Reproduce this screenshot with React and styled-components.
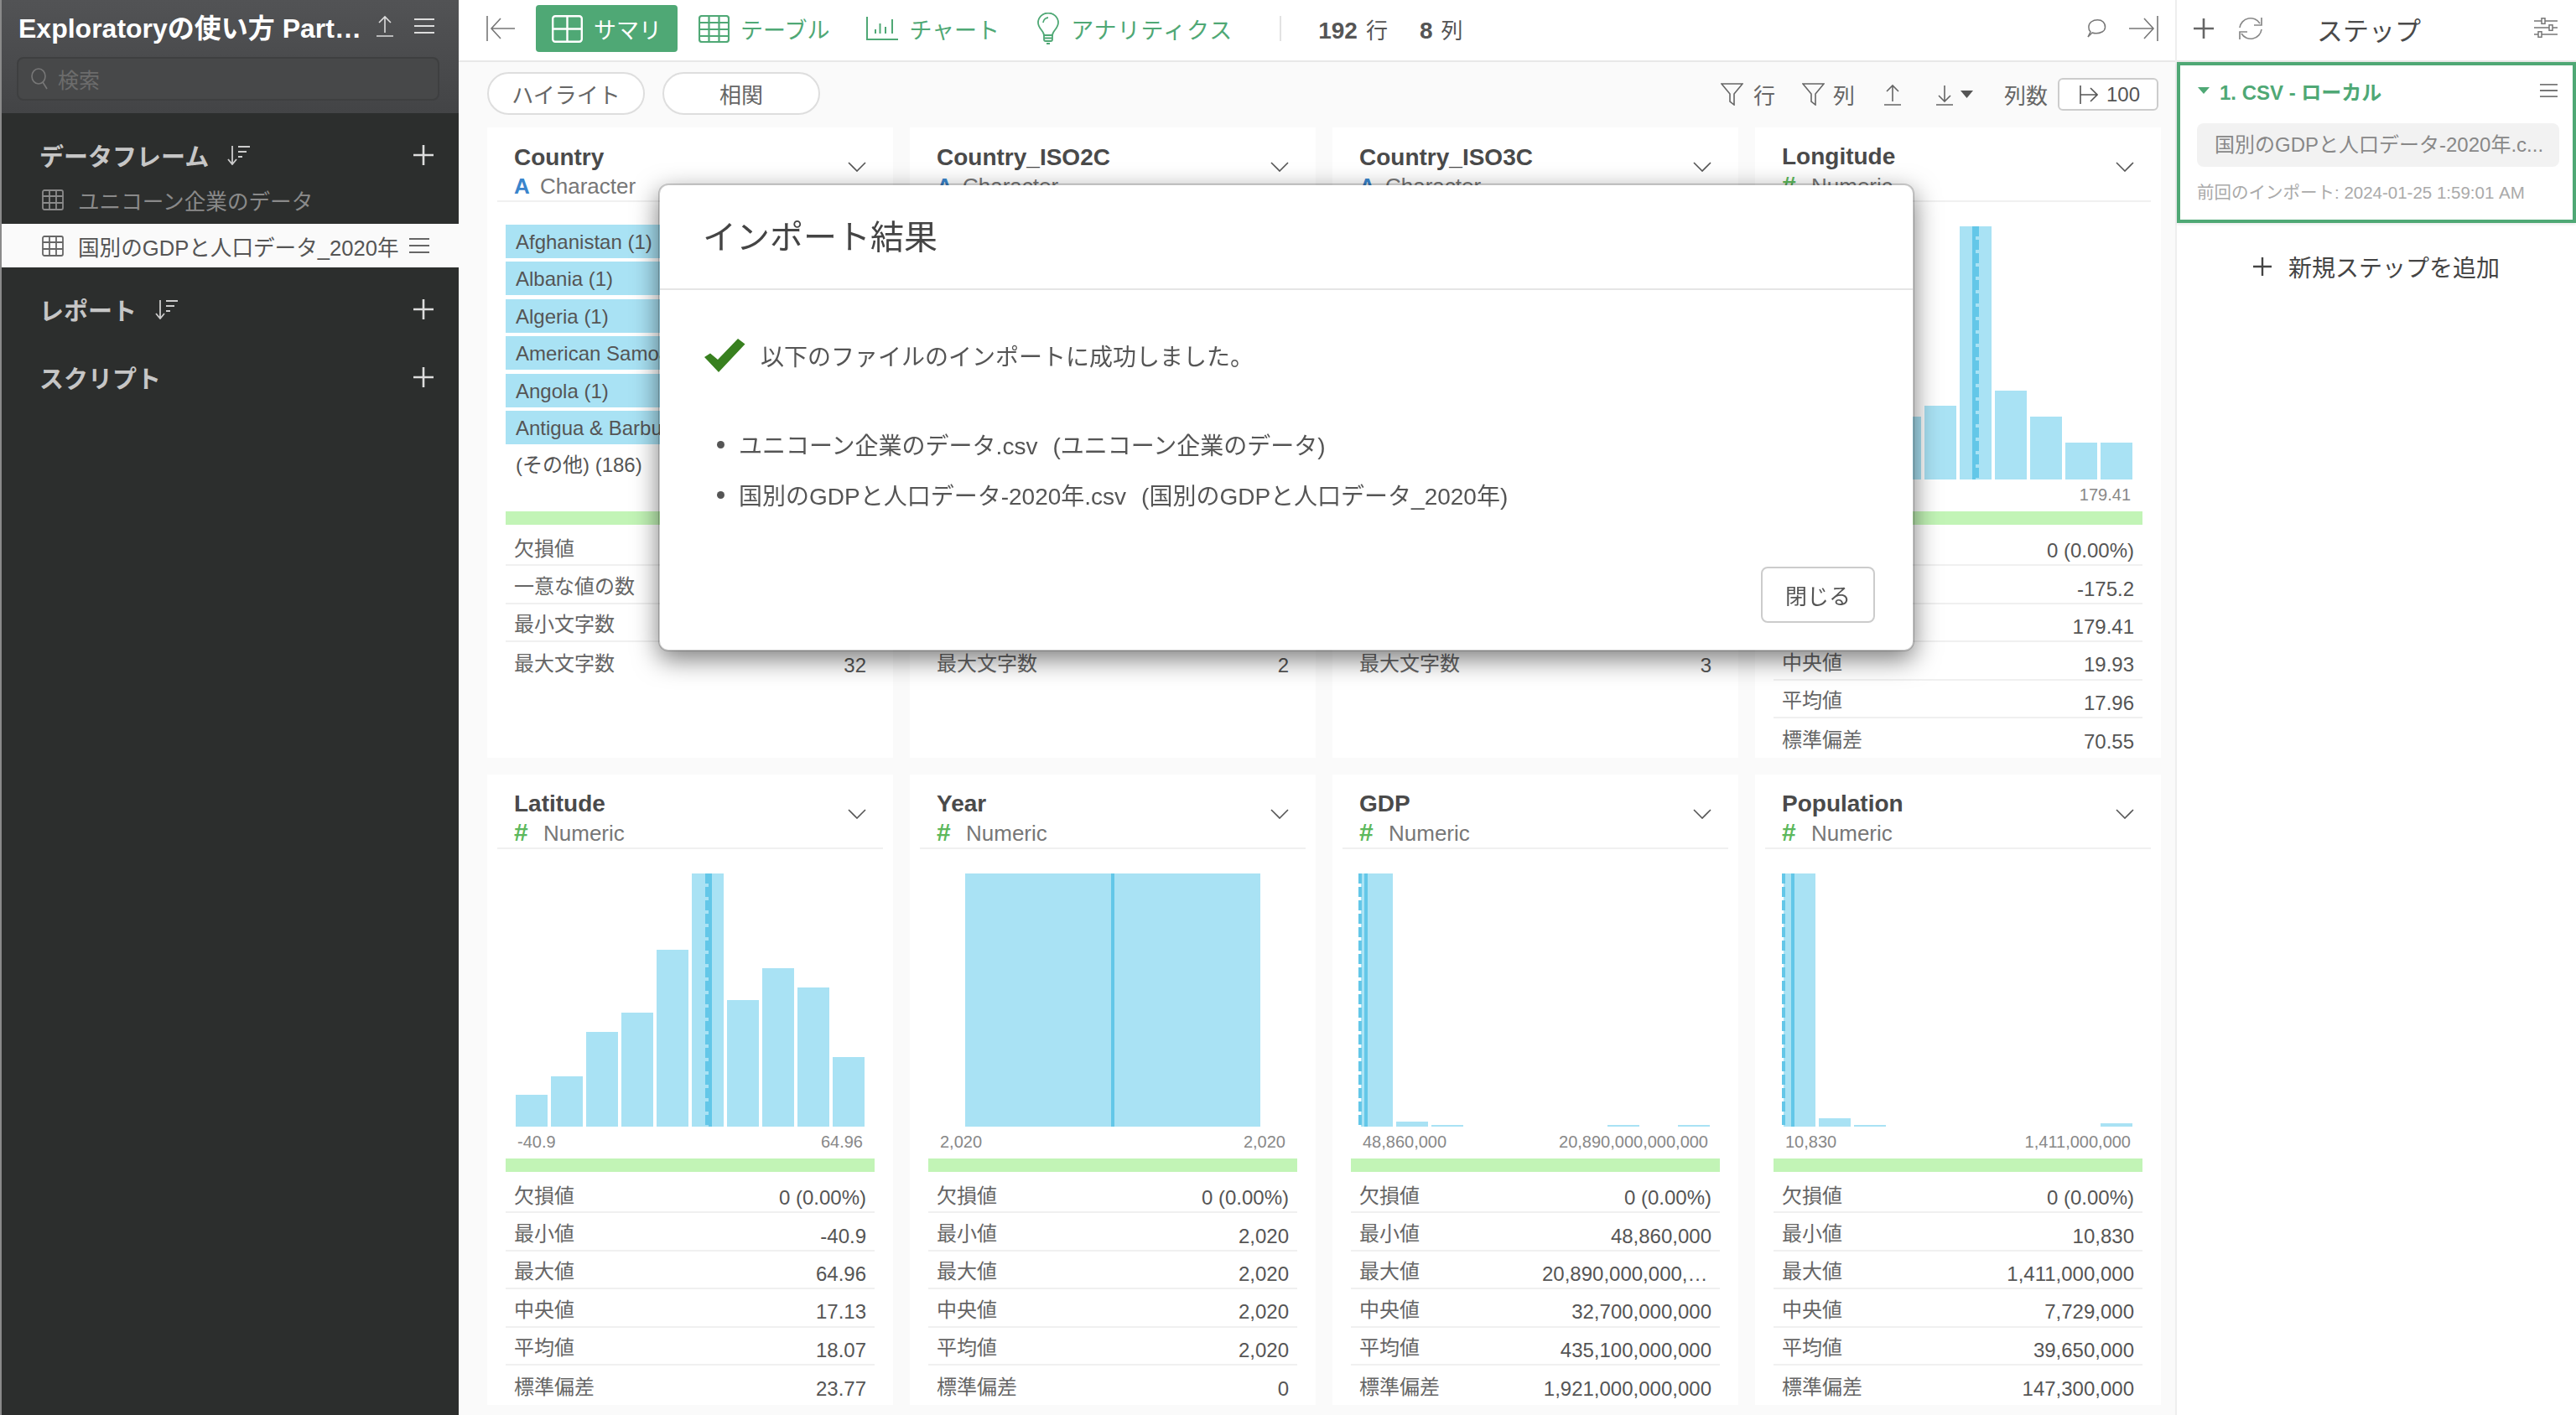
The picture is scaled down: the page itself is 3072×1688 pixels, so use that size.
import React from 'react'
import styled, { createGlobalStyle } from 'styled-components'

const FONT = `"Liberation Sans", "Noto Sans CJK JP", sans-serif`
const GREEN = '#4fa875'
const BAR = '#a9e2f4'
const MARK = '#63c7e8'

const Global = createGlobalStyle`
  html, body { margin: 0; padding: 0; background: #fafafa; }
  body { font-family: ${FONT}; color: #555; overflow: hidden; }
  * { box-sizing: border-box; }
`

const Page = styled.div`
  display: flex;
  width: 3072px;
  height: 1688px;
  overflow: hidden;
`

/* ---------- icons ---------- */

const Svg = styled.svg`
  display: block;
  flex: none;
  fill: none;
  stroke: ${p => p.$c || '#777'};
  stroke-width: ${p => p.$s || 1.6}px;
`

const Burger = ({ c, w = 24, h = 20 }) => (
  <Svg width={w} height={h} viewBox='0 0 24 20' preserveAspectRatio='none' $c={c} $s={2}>
    <path d='M0 2H24M0 10H24M0 18H24' />
  </Svg>
)
const Upload = ({ c }) => (
  <Svg width='22' height='26' viewBox='0 0 22 26' $c={c}>
    <path d='M11 21V2M4 9L11 2L18 9M1 25H21' />
  </Svg>
)
const Download = ({ c }) => (
  <Svg width='22' height='26' viewBox='0 0 22 26' $c={c}>
    <path d='M11 2V21M4 14L11 21L18 14M1 25H21' />
  </Svg>
)
const Plus = ({ c = '#ddd', size = 24, s = 2.6 }) => (
  <Svg width={size} height={size} viewBox='0 0 24 24' $c={c} $s={s}>
    <path d='M12 0V24M0 12H24' />
  </Svg>
)
const Sort = ({ c = '#ccc' }) => (
  <Svg width='28' height='24' viewBox='0 0 28 24' $c={c} $s={1.8}>
    <path d='M6 1V22M1 17L6 23L11 17M13 2H27M13 8H23M13 14H18' />
  </Svg>
)
const Grid = ({ c }) => (
  <Svg width='26' height='25' viewBox='0 0 26 25' $c={c} $s={1.8}>
    <rect x='1' y='1' width='24' height='23' rx='2' />
    <path d='M1 8H25M1 16H25M9 1V24M17 1V24' />
  </Svg>
)
const Search = () => (
  <Svg width='20' height='26' viewBox='0 0 20 26' $c='#777' $s={1.6}>
    <ellipse cx='9' cy='10' rx='8' ry='9' />
    <path d='M14 17L19 25' />
  </Svg>
)
const ArrowToLeft = () => (
  <Svg width='35' height='30' viewBox='0 0 35 30' $c='#777'>
    <path d='M1 0V30M34 15H7M17 3L6 15L17 27' />
  </Svg>
)
const ArrowToRight = () => (
  <Svg width='35' height='30' viewBox='0 0 35 30' $c='#777'>
    <path d='M0 15H28M18 3L29 15L18 27M34 0V30' />
  </Svg>
)
const Summary = () => (
  <Svg width='37' height='33' viewBox='0 0 37 33' $c='#fff' $s={2.4}>
    <rect x='1.2' y='1.2' width='34.6' height='30.6' rx='3' />
    <path d='M18.5 1V32M1 16.5H36' />
  </Svg>
)
const TableTab = () => (
  <Svg width='37' height='33' viewBox='0 0 37 33' $c={GREEN} $s={2.2}>
    <rect x='1' y='1' width='35' height='31' rx='3' />
    <path d='M1 9H36M1 17H36M1 25H36M12.5 1V32M24.5 1V32' />
  </Svg>
)
const ChartTab = () => (
  <Svg width='38' height='28' viewBox='0 0 38 28' $c={GREEN} $s={2}>
    <path d='M1 0V27H38' />
    <path d='M11 15V20M16.5 8V20M23 12V20M31 3V20' />
  </Svg>
)
const Bulb = () => (
  <Svg width='28' height='38' viewBox='-2 0 28 38' $c={GREEN} $s={1.8}>
    <path d='M8 27C8 22 1 19 1 12A12 11.5 0 0 1 25 12C25 19 18 22 18 27Z' transform='translate(-1 0)' />
    <path d='M7 27V32C7 33 8 34 9 34H15C16 34 17 33 17 32V27M7 30.5H17M10 37H14' />
    <path d='M6 12A6.5 6.5 0 0 1 12 6' />
  </Svg>
)
const Chat = () => (
  <Svg width='24' height='22' viewBox='0 0 24 22' $c='#777' $s={1.5}>
    <path d='M5 15C2 12 2 6 6 3C10 0 17 0 20 3C24 7 23 13 19 15C15 17 10 17 7 16L2 21L5 15Z' />
  </Svg>
)
const Funnel = () => (
  <Svg width='27' height='27' viewBox='0 0 27 27' $c='#666' $s={1.6}>
    <path d='M1 1H26L16 13V26L11 22V13Z' />
  </Svg>
)
const Caret = ({ c = '#555', w = 15, h = 9 }) => (
  <Svg width={w} height={h} viewBox='0 0 15 9' preserveAspectRatio='none' $c='none'>
    <polygon points='0,0 15,0 7.5,9' fill={c} />
  </Svg>
)
const ArrowFromBar = () => (
  <Svg width='22' height='24' viewBox='0 0 22 24' $c='#555'>
    <path d='M1 1V23M1 12H20M13 4L21 12L13 20' />
  </Svg>
)
const Refresh = () => (
  <Svg width='28' height='28' viewBox='0 0 28 28' $c='#888' $s={1.7}>
    <path d='M1 13A13 13 0 0 1 25 8M27 1V10H18' />
    <path d='M27 15A13 13 0 0 1 3 20M1 27V18H10' />
  </Svg>
)
const Sliders = () => (
  <Svg width='28' height='24' viewBox='0 0 28 24' $c='#777' $s={1.5}>
    <path d='M0 4H28M0 12H28M0 20H28' />
    <rect x='9' y='0.8' width='4' height='6.5' fill='#fff' />
    <rect x='18' y='8.8' width='4' height='6.5' fill='#fff' />
    <rect x='5' y='16.8' width='4' height='6.5' fill='#fff' />
  </Svg>
)
const Chevron = () => (
  <Svg width='22' height='12' viewBox='0 0 22 12' $c='#555' $s={1.6}>
    <path d='M1 1L11 11L21 1' />
  </Svg>
)
const Check = () => (
  <Svg width='49' height='40' viewBox='0 0 49 40' $c='none'>
    <polygon points='0,22 7,17.6 16,25 40,0 48.5,6.6 17,40' fill='#38801f' />
  </Svg>
)

/* ---------- left sidebar ---------- */

const Sidebar = styled.aside`
  flex: none;
  width: 547px;
  background: #2c2e2d;
  border-left: 2px solid #8a8a8a;
`

const ProjectHead = styled.div`
  height: 135px;
  padding: 13px 29px 0 20px;
  background: linear-gradient(#525355, #434446);
`

const ProjectRow = styled.div`
  display: flex;
  align-items: center;
  height: 36px;
`

const ProjectName = styled.div`
  flex: 1;
  font-size: 32px;
  font-weight: 700;
  color: #fff;
  white-space: nowrap;
`

const ProjectTools = styled.div`
  display: flex;
  align-items: center;
  gap: 24px;
`

const SearchBox = styled.div`
  display: flex;
  align-items: center;
  gap: 12px;
  width: 504px;
  height: 52px;
  margin: 19px 0 0 -2px;
  padding-left: 15px;
  background: #474849;
  border: 2px solid #3e3f40;
  border-radius: 8px;
  font-size: 25px;
  color: #6c6c6c;
`

const SideBody = styled.div`
  padding-top: 24px;
`

const SideHeading = styled.div`
  display: flex;
  align-items: center;
  gap: 22px;
  height: 52px;
  margin-top: ${p => p.$top || 0}px;
  padding: 0 30px 0 45px;
  font-size: 29px;
  font-weight: 700;
  color: #c6c6c6;
`

const HeadingPlus = styled.span`
  margin-left: auto;
`

const SideItem = styled.div`
  display: flex;
  align-items: center;
  height: 52px;
  padding: 0 35px ${p => (p.$active ? 0 : 3)}px 48px;
  font-size: 25.6px;
  white-space: nowrap;
  color: ${p => (p.$active ? '#555' : '#8a8a8a')};
  background: ${p => (p.$active ? '#fafafa' : 'transparent')};
  margin-top: ${p => (p.$active ? 1 : 3)}px;

  > svg:first-child {
    margin-right: 17px;
  }
`

const ItemBurger = styled.span`
  margin-left: auto;
`

/* ---------- main column ---------- */

const Main = styled.main`
  flex: none;
  width: 2047px;
  display: flex;
  flex-direction: column;
`

const Toolbar = styled.div`
  display: flex;
  align-items: center;
  flex: none;
  height: 74px;
  padding: 0 20px 4px 33px;
  background: #fff;
  border-bottom: 2px solid #e8e8e8;
`

const Tabs = styled.div`
  display: flex;
  align-items: center;
  gap: 6px;
  margin-left: 24px;
`

const Tab = styled.div`
  display: flex;
  align-items: center;
  gap: 13px;
  height: 56px;
  padding: 0 19px;
  font-size: 27px;
  letter-spacing: ${p => (p.$wide ? 1 : 0)}px;
  border-radius: 4px;
  white-space: nowrap;
  color: ${p => (p.$active ? '#fff' : GREEN)};
  background: ${p => (p.$active ? GREEN : 'transparent')};
`

const Divider = styled.div`
  width: 2px;
  height: 30px;
  margin: 0 44px 0 37px;
  background: #e2e2e2;
`

const Count = styled.div`
  margin-right: 38px;
  font-size: 26px;
  color: #555;
  white-space: nowrap;

  b {
    font-size: 28px;
    margin-right: 10px;
  }
`

const RightTools = styled.div`
  display: flex;
  align-items: center;
  gap: 27px;
  margin-left: auto;
`

const FilterBar = styled.div`
  display: flex;
  align-items: flex-start;
  flex: none;
  height: 78px;
  padding: 12px 20px 0 34px;
`

const Pill = styled.div`
  display: flex;
  align-items: center;
  justify-content: center;
  width: 188px;
  height: 51px;
  margin-right: 21px;
  background: #fff;
  border: 2px solid #dedede;
  border-radius: 26px;
  font-size: 26px;
  color: #666;
`

const FilterTools = styled.div`
  display: flex;
  align-items: center;
  height: 39px;
  margin: 7px 0 0 auto;
  font-size: 26px;
  color: #666;
`

const FilterItem = styled.div`
  display: flex;
  align-items: center;
  gap: ${p => p.$gap || 12}px;
  margin-left: ${p => p.$left || 0}px;
`

const LimitBox = styled.div`
  display: flex;
  align-items: center;
  gap: 10px;
  width: 120px;
  height: 39px;
  margin-left: 12px;
  padding-left: 24px;
  background: #fff;
  border: 2px solid #ccc;
  border-radius: 6px;
  font-size: 24px;
  color: #555;
`

const CardGrid = styled.div`
  display: grid;
  grid-template-columns: repeat(4, 484px);
  grid-auto-rows: 752px;
  gap: 20px;
  padding-left: 34px;
`

const CardBox = styled.section`
  background: #fff;
`

const CardHead = styled.header`
  display: flex;
  justify-content: space-between;
  align-items: center;
  height: 89px;
  margin: 0 12px;
  padding: 18px 20px 0;
  border-bottom: 2px solid #f0f0f0;
`

const CardTitle = styled.div`
  font-size: 28px;
  line-height: 34px;
  font-weight: 700;
  color: #4a4a4a;
  white-space: nowrap;
`

const CardType = styled.div`
  display: flex;
  align-items: baseline;
  font-size: 26px;
  line-height: 34px;
  color: #777;
`

const TypeMark = styled.span`
  width: ${p => (p.$text ? 31 : 35)}px;
  font-size: ${p => (p.$text ? 26 : 30)}px;
  font-weight: 700;
  color: ${p => (p.$text ? '#3a85cc' : '#5cb85c')};
`

const ChevronWrap = styled.span`
  margin-top: -12px;
`

const CardBody = styled.div`
  height: 369px;
  padding-top: 29px;
`

const Bars = styled.div`
  position: relative;
  display: flex;
  align-items: flex-end;
  gap: 4px;
  height: 302px;
  margin: 0 34px;
`

const Bar = styled.div`
  flex: none;
  width: 38px;
  height: ${p => p.$h}%;
  background: ${BAR};
`

const WideBar = styled.div`
  width: 352px;
  height: 100%;
  margin-left: 32px;
  background: ${BAR};
`

const SolidMark = styled.div`
  position: absolute;
  top: 0;
  bottom: 0;
  left: ${p => p.$x}px;
  width: 4px;
  background: ${MARK};
`

const DashedMark = styled.div`
  position: absolute;
  top: 0;
  bottom: 0;
  left: ${p => p.$x}px;
  width: 4px;
  background: repeating-linear-gradient(${MARK} 0 12px, transparent 12px 16px);
`

const AxisLabels = styled.div`
  display: flex;
  justify-content: space-between;
  margin: 0 36px 0 36px;
  font-size: 20px;
  line-height: 36px;
  color: #888;
`

const CategoryList = styled.div`
  display: flex;
  flex-direction: column;
  gap: 4.4px;
  margin: -2px 22px 0;
`

const Category = styled.div`
  height: 40px;
  padding-left: 12px;
  font-size: 24px;
  line-height: 42px;
  color: #555;
  white-space: nowrap;
  background: ${p => (p.$plain ? 'transparent' : BAR)};
`

const FillBar = styled.div`
  height: 16px;
  margin: 0 22px;
  background: #c2f4b6;
`

const StatList = styled.div`
  margin: 4px 22px 0;
`

const StatRow = styled.div`
  display: flex;
  align-items: center;
  justify-content: space-between;
  height: 45.4px;
  padding: 1px 10px 0;
  border-bottom: 2px solid #f0f0f0;
  font-size: 24px;
  color: #666;

  &:last-child {
    border-bottom: none;
  }
`

const StatValue = styled.span`
  max-width: 202px;
  padding-top: 10px;
  overflow: hidden;
  text-overflow: ellipsis;
  white-space: nowrap;
  color: #555;
`

const StatLabel = styled.span`
  flex: none;
  white-space: nowrap;
`

/* ---------- right panel ---------- */

const StepPanel = styled.aside`
  flex: none;
  width: 478px;
  background: #fff;
  border-left: 2px solid #eee;
`

const StepHead = styled.div`
  display: flex;
  align-items: center;
  height: 74px;
  padding: 0 22px 4px 20px;
  border-bottom: 2px solid #e8e8e8;
`

const StepRefresh = styled.span`
  margin-left: 30px;
`

const StepTitle = styled.div`
  margin-left: 65px;
  font-size: 31px;
  color: #4a4a4a;
`

const StepTune = styled.span`
  margin: -3px 0 0 auto;
`

const StepCard = styled.div`
  height: 192px;
  padding: 0 18px 0 20px;
  border: 4px solid ${GREEN};
  box-shadow: 0 2px 3px rgba(0, 0, 0, 0.08);
`

const StepTop = styled.div`
  display: flex;
  align-items: center;
  gap: 12px;
  height: 60px;
  margin-left: 1px;
  font-size: 24px;
  font-weight: 700;
  color: ${GREEN};
`

const StepBurger = styled.span`
  margin-left: auto;
`

const FileChip = styled.div`
  width: 432px;
  height: 52px;
  margin-top: 9px;
  padding-left: 21px;
  border-radius: 8px;
  background: #f2f2f2;
  font-size: 24px;
  line-height: 52px;
  color: #888;
  white-space: nowrap;
`

const LastImport = styled.div`
  margin-top: 15px;
  font-size: 20.5px;
  line-height: 32px;
  color: #aaa;
  white-space: nowrap;
`

const AddStep = styled.div`
  display: flex;
  align-items: center;
  justify-content: center;
  gap: 20px;
  height: 104px;
  font-size: 28px;
  color: #444;
`

/* ---------- modal ---------- */

const Modal = styled.div`
  position: fixed;
  left: 785px;
  top: 219px;
  width: 1498px;
  height: 558px;
  display: flex;
  flex-direction: column;
  background: #fff;
  border: 2px solid rgba(0, 0, 0, 0.2);
  background-clip: padding-box;
  border-radius: 12px;
  box-shadow: 0 10px 30px rgba(0, 0, 0, 0.5);
`

const ModalHead = styled.div`
  flex: none;
  height: 125px;
  padding: 0 51px;
  border-bottom: 2px solid #e5e5e5;
  font-size: 40px;
  line-height: 124px;
  color: #444;
`

const ModalBody = styled.div`
  flex: 1;
  padding: 58px 53px 0;
  font-size: 28px;
  color: #555;
`

const Message = styled.div`
  display: flex;
  align-items: center;
  gap: 18px;
  height: 40px;
`

const FileList = styled.ul`
  margin: 56px 0 0;
  padding: 0 0 0 15px;
  list-style: none;
`

const FileItem = styled.li`
  display: flex;
  align-items: center;
  height: 60px;
  white-space: nowrap;

  &::before {
    content: '';
    width: 9px;
    height: 9px;
    margin-right: 17px;
    border-radius: 50%;
    background: #555;
  }
`

const FileAlias = styled.span`
  margin-left: 18px;
`

const ModalFoot = styled.div`
  display: flex;
  justify-content: flex-end;
  padding: 0 45px 32px;
`

const CloseButton = styled.button`
  width: 136px;
  height: 67px;
  background: #fff;
  border: 2px solid #ccc;
  border-radius: 8px;
  font-family: ${FONT};
  font-size: 26px;
  color: #555;
`

/* ---------- data ---------- */

const TEXT_LABELS = ['欠損値', '一意な値の数', '最小文字数', '最大文字数']
const NUM_LABELS = ['欠損値', '最小値', '最大値', '中央値', '平均値', '標準偏差']

const CARDS = [
  {
    name: 'Country',
    categories: ['Afghanistan (1)', 'Albania (1)', 'Algeria (1)', 'American Samoa (1)', 'Angola (1)', 'Antigua & Barbuda (1)'],
    rest: '(その他) (186)',
    stats: ['0 (0.00%)', '192', '4', '32'],
  },
  {
    name: 'Country_ISO2C',
    categories: ['AF (1)', 'AL (1)', 'DZ (1)', 'AS (1)', 'AO (1)', 'AG (1)'],
    rest: '(その他) (186)',
    stats: ['0 (0.00%)', '192', '2', '2'],
  },
  {
    name: 'Country_ISO3C',
    categories: ['AFG (1)', 'ALB (1)', 'DZA (1)', 'ASM (1)', 'AGO (1)', 'ATG (1)'],
    rest: '(その他) (186)',
    stats: ['0 (0.00%)', '192', '3', '3'],
  },
  {
    name: 'Longitude',
    bars: [10, 16, 20, 24.8, 29, 100, 35.2, 24.8, 14.5, 14.5],
    solid: 225,
    dashed: 229,
    axis: ['-175.2', '179.41'],
    stats: ['0 (0.00%)', '-175.2', '179.41', '19.93', '17.96', '70.55'],
  },
  {
    name: 'Latitude',
    bars: [12.6, 20, 37.4, 45, 70, 100, 50, 62.6, 55, 27.6],
    solid: 230,
    dashed: 226,
    axis: ['-40.9', '64.96'],
    stats: ['0 (0.00%)', '-40.9', '64.96', '17.13', '18.07', '23.77'],
  },
  {
    name: 'Year',
    wide: true,
    solid: 206,
    axis: ['2,020', '2,020'],
    stats: ['0 (0.00%)', '2,020', '2,020', '2,020', '2,020', '0'],
  },
  {
    name: 'GDP',
    bars: [100, 2, 0.6, 0, 0, 0, 0, 0.6, 0, 0.6],
    solid: 4,
    dashed: -3,
    axis: ['48,860,000', '20,890,000,000,000'],
    stats: ['0 (0.00%)', '48,860,000', '20,890,000,000,000', '32,700,000,000', '435,100,000,000', '1,921,000,000,000'],
  },
  {
    name: 'Population',
    bars: [100, 3.3, 0.6, 0, 0, 0, 0, 0, 0, 1.2],
    solid: 9,
    dashed: -2,
    axis: ['10,830', '1,411,000,000'],
    stats: ['0 (0.00%)', '10,830', '1,411,000,000', '7,729,000', '39,650,000', '147,300,000'],
  },
]

const Card = ({ card }) => {
  const isText = !!card.categories
  const labels = isText ? TEXT_LABELS : NUM_LABELS
  return (
    <CardBox>
      <CardHead>
        <div>
          <CardTitle>{card.name}</CardTitle>
          <CardType>
            <TypeMark $text={isText}>{isText ? 'A' : '#'}</TypeMark>
            {isText ? 'Character' : 'Numeric'}
          </CardType>
        </div>
        <ChevronWrap>
          <Chevron />
        </ChevronWrap>
      </CardHead>
      <CardBody>
        {isText ? (
          <CategoryList>
            {card.categories.map(c => (
              <Category key={c}>{c}</Category>
            ))}
            <Category $plain>{card.rest}</Category>
          </CategoryList>
        ) : (
          <>
            <Bars>
              {card.wide ? <WideBar /> : card.bars.map((h, i) => <Bar key={i} $h={h} />)}
              {card.dashed !== undefined && <DashedMark $x={card.dashed} />}
              <SolidMark $x={card.solid} />
            </Bars>
            <AxisLabels>
              <span>{card.axis[0]}</span>
              <span>{card.axis[1]}</span>
            </AxisLabels>
          </>
        )}
      </CardBody>
      <FillBar />
      <StatList>
        {labels.map((label, i) => (
          <StatRow key={label}>
            <StatLabel>{label}</StatLabel>
            <StatValue>{card.stats[i]}</StatValue>
          </StatRow>
        ))}
      </StatList>
    </CardBox>
  )
}

const App = () => {
  return (
    <Page>
      <Global />
      <Sidebar>
        <ProjectHead>
          <ProjectRow>
            <ProjectName>Exploratoryの使い方 Part…</ProjectName>
            <ProjectTools>
              <Upload c='#ddd' />
              <Burger c='#ddd' />
            </ProjectTools>
          </ProjectRow>
          <SearchBox>
            <Search />
            検索
          </SearchBox>
        </ProjectHead>
        <SideBody>
          <SideHeading>
            データフレーム
            <Sort />
            <HeadingPlus>
              <Plus />
            </HeadingPlus>
          </SideHeading>
          <SideItem>
            <Grid c='#8a8a8a' />
            ユニコーン企業のデータ
          </SideItem>
          <SideItem $active>
            <Grid c='#666' />
            国別のGDPと人口データ_2020年
            <ItemBurger>
              <Burger c='#666' />
            </ItemBurger>
          </SideItem>
          <SideHeading $top={24}>
            レポート
            <Sort />
            <HeadingPlus>
              <Plus />
            </HeadingPlus>
          </SideHeading>
          <SideHeading $top={29}>
            スクリプト
            <HeadingPlus>
              <Plus />
            </HeadingPlus>
          </SideHeading>
        </SideBody>
      </Sidebar>

      <Main>
        <Toolbar>
          <ArrowToLeft />
          <Tabs>
            <Tab $active>
              <Summary />
              サマリ
            </Tab>
            <Tab>
              <TableTab />
              テーブル
            </Tab>
            <Tab>
              <ChartTab />
              チャート
            </Tab>
            <Tab $wide>
              <Bulb />
              アナリティクス
            </Tab>
          </Tabs>
          <Divider />
          <Count>
            <b>192</b>行
          </Count>
          <Count>
            <b>8</b>列
          </Count>
          <RightTools>
            <Chat />
            <ArrowToRight />
          </RightTools>
        </Toolbar>

        <FilterBar>
          <Pill>ハイライト</Pill>
          <Pill>相関</Pill>
          <FilterTools>
            <FilterItem>
              <Funnel />
              行
            </FilterItem>
            <FilterItem $left={32} $gap={10}>
              <Funnel />
              列
            </FilterItem>
            <FilterItem $left={34}>
              <Upload c='#666' />
            </FilterItem>
            <FilterItem $left={40} $gap={8}>
              <Download c='#666' />
              <Caret />
            </FilterItem>
            <FilterItem $left={37}>列数</FilterItem>
            <LimitBox>
              <ArrowFromBar />
              100
            </LimitBox>
          </FilterTools>
        </FilterBar>

        <CardGrid>
          {CARDS.map(card => (
            <Card key={card.name} card={card} />
          ))}
        </CardGrid>
      </Main>

      <StepPanel>
        <StepHead>
          <Plus c='#666' s={2.6} />
          <StepRefresh>
            <Refresh />
          </StepRefresh>
          <StepTitle>ステップ</StepTitle>
          <StepTune>
            <Sliders />
          </StepTune>
        </StepHead>
        <StepCard>
          <StepTop>
            <Caret c={GREEN} w={14} h={8} />
            1. CSV - ローカル
            <StepBurger>
              <Burger c='#777' w={21} h={18} />
            </StepBurger>
          </StepTop>
          <FileChip>国別のGDPと人口データ-2020年.c...</FileChip>
          <LastImport>前回のインポート: 2024-01-25 1:59:01 AM</LastImport>
        </StepCard>
        <AddStep>
          <Plus c='#444' size={22} s={2.6} />
          新規ステップを追加
        </AddStep>
      </StepPanel>

      <Modal>
        <ModalHead>インポート結果</ModalHead>
        <ModalBody>
          <Message>
            <Check />
            以下のファイルのインポートに成功しました。
          </Message>
          <FileList>
            <FileItem>
              ユニコーン企業のデータ.csv
              <FileAlias>(ユニコーン企業のデータ)</FileAlias>
            </FileItem>
            <FileItem>
              国別のGDPと人口データ-2020年.csv
              <FileAlias>(国別のGDPと人口データ_2020年)</FileAlias>
            </FileItem>
          </FileList>
        </ModalBody>
        <ModalFoot>
          <CloseButton>閉じる</CloseButton>
        </ModalFoot>
      </Modal>
    </Page>
  )
}

export default App
